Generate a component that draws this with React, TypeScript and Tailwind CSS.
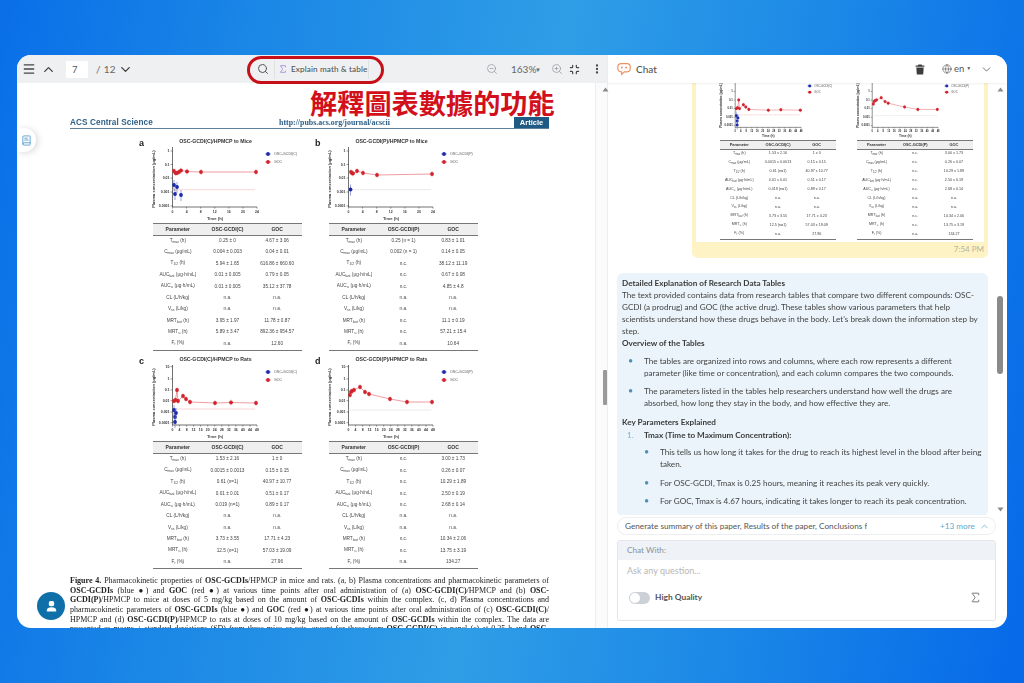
import React from "react";
import { Menu, ChevronUp, ChevronDown, Search, Sigma, ZoomOut, ZoomIn, Minimize, EllipsisVertical, Globe, BookText } from "lucide-react";

type Pt = [number, number];
type Row = [string, string, string, string];
type PanelData = {
  label: string;
  title: string;
  legend: string;
  col: string;
  ticks: Pt[];
  xLabels: string[];
  red: Pt[];
  blue: Pt[];
  dotted: string;
  dottedY: number;
  rows: Row[];
};

const mkRows = (v: [string, string][]): Row[] => {
  const names: [string, string, string][] = [
    ["T", "max", " (h)"],
    ["C", "max", " (μg/mL)"],
    ["T", "1/2", " (h)"],
    ["AUC", "last", " (μg·h/mL)"],
    ["AUC", "∞", " (μg·h/mL)"],
    ["CL", "", " (L/h/kg)"],
    ["V", "ss", " (L/kg)"],
    ["MRT", "last", " (h)"],
    ["MRT", "∞", " (h)"],
    ["F", "r", " (%)"],
  ];
  return names.map((n, i) => [n[0] + "|" + n[1] + "|" + n[2], v[i][0], v[i][1], ""] as Row);
};

const ticks5: Pt[] = [[6, 1], [19.5, 0.1], [33, 0.01], [47, 0.001], [61, 0.0001]];
const ticks6: Pt[] = [[3.7, 10], [16, 1], [27, 0.1], [37.7, 0.01], [49, 0.001], [59.7, 0.0001]];
const x24 = ["0", "4", "8", "12", "16", "20", "24"];
const x48 = ["0", "4", "8", "12", "16", "20", "24", "28", "32", "36", "40", "44", "48"];

const panels: PanelData[] = [
  {
    label: "a", title: "OSC-GCDI(C)/HPMCP to Mice", legend: "OSC-GCDI(C)", col: "OSC-GCDI(C)",
    ticks: ticks5, xLabels: x24, dotted: "#f1a3a8", dottedY: 44.7,
    red: [[21, 26], [22.5, 28], [24, 28], [26, 27], [28, 25.5], [34, 26.5], [48, 27], [103, 27]],
    blue: [[21, 40], [22, 49], [24, 42], [28, 50]],
    rows: mkRows([["0.25 ± 0", "4.67 ± 3.06"], ["0.004 ± 0.003", "0.04 ± 0.01"], ["5.94 ± 1.65", "616.86 ± 660.60"], ["0.01 ± 0.005", "0.79 ± 0.05"], ["0.01 ± 0.005", "35.12 ± 37.78"], ["n.a.", "n.a."], ["n.a.", "n.a."], ["3.95 ± 1.97", "11.78 ± 0.87"], ["5.89 ± 3.47", "892.36 ± 954.57"], ["n.a.", "12.60"]]),
  },
  {
    label: "b", title: "OSC-GCDI(P)/HPMCP to Mice", legend: "OSC-GCDI(P)", col: "OSC-GCDI(P)",
    ticks: ticks5, xLabels: x24, dotted: "#cfcfcf", dottedY: 44.7,
    red: [[22, 27], [23, 28], [24, 28.5], [28, 26], [34, 28], [48, 30], [103, 29]],
    blue: [[21.5, 44.5]],
    rows: mkRows([["0.25 (n = 1)", "0.83 ± 1.01"], ["0.002 (n = 1)", "0.14 ± 0.05"], ["n.c.", "38.12 ± 11.19"], ["n.c.", "0.67 ± 0.08"], ["n.c.", "4.85 ± 4.8"], ["n.a.", "n.a."], ["n.a.", "n.a."], ["n.c.", "11.1 ± 0.19"], ["n.c.", "57.21 ± 15.4"], ["n.a.", "10.64"]]),
  },
  {
    label: "c", title: "OSC-GCDI(C)/HPMCP to Rats", legend: "OSC-GCDI(C)", col: "OSC-GCDI(C)",
    ticks: ticks6, xLabels: x48, dotted: "#f1a3a8", dottedY: 46,
    red: [[21, 38], [22.5, 37], [24, 27], [25, 38], [30, 33], [33, 36], [37, 39], [62, 40], [78, 39.5], [103, 40]],
    blue: [[21, 47], [22, 54], [23, 50], [22, 59]],
    rows: mkRows([["1.53 ± 2.16", "1 ± 0"], ["0.0015 ± 0.0013", "0.15 ± 0.15"], ["0.61 (n=1)", "40.97 ± 10.77"], ["0.01 ± 0.01", "0.51 ± 0.17"], ["0.019 (n=1)", "0.89 ± 0.17"], ["n.a.", "n.a."], ["n.a.", "n.a."], ["3.73 ± 3.55", "17.71 ± 4.23"], ["12.5 (n=1)", "57.03 ± 19.09"], ["n.a.", "27.96"]]),
  },
  {
    label: "d", title: "OSC-GCDI(P)/HPMCP to Rats", legend: "OSC-GCDI(P)", col: "OSC-GCDI(P)",
    ticks: ticks6, xLabels: x48, dotted: "#cfcfcf", dottedY: 47,
    red: [[21, 32], [22, 29], [23, 28], [25, 27], [31, 24], [36, 29], [40, 31], [61, 36], [78, 39], [103, 39]],
    blue: [],
    rows: mkRows([["n.c.", "3.00 ± 1.73"], ["n.c.", "0.26 ± 0.07"], ["n.c.", "10.29 ± 1.89"], ["n.c.", "2.50 ± 0.19"], ["n.c.", "2.68 ± 0.14"], ["n.a.", "n.a."], ["n.a.", "n.a."], ["n.c.", "10.34 ± 2.06"], ["n.c.", "13.75 ± 3.19"], ["n.a.", "134.27"]]),
  },
];

function Chart({ p }: { p: PanelData }) {
  const line = (pts: Pt[]) => pts.map((q) => q.join(",")).join(" ");
  const xStep = 84.5 / (p.xLabels.length - 1);
  return (
    <svg width="152" height="78" viewBox="0 0 152 78" className="block overflow-visible">
      <text x="2" y="34" transform="rotate(-90 2 34)" textAnchor="middle" fontSize="4" fontWeight="700" fill="#333" fontFamily="Liberation Sans">Plasma concentration (μg/mL)</text>
      <line x1="19.5" y1="2" x2="19.5" y2="62" stroke="#333" strokeWidth="0.7" />
      <line x1="19.5" y1="62" x2="104" y2="62" stroke="#333" strokeWidth="0.7" />
      {p.ticks.map(([y, v]) => (
        <g key={v}>
          <line x1="17.5" y1={y} x2="19.5" y2={y} stroke="#333" strokeWidth="0.5" />
          <text x="16.5" y={y + 1.2} textAnchor="end" fontSize="3.5" fontWeight="700" fill="#333" fontFamily="Liberation Sans">{v}</text>
        </g>
      ))}
      {p.xLabels.map((l, i) => (
        <g key={l}>
          <line x1={19.5 + i * xStep} y1="62" x2={19.5 + i * xStep} y2="63.6" stroke="#333" strokeWidth="0.5" />
          <text x={19.5 + i * xStep} y="68" textAnchor="middle" fontSize="3.4" fontWeight="700" fill="#333" fontFamily="Liberation Sans">{l}</text>
        </g>
      ))}
      <text x="62" y="75" textAnchor="middle" fontSize="4.2" fontWeight="700" fill="#444" fontFamily="Liberation Sans">Time (h)</text>
      <line x1="19.5" y1={p.dottedY} x2="102" y2={p.dottedY} stroke={p.dotted} strokeWidth="0.7" strokeDasharray="1 0.6" />
      <polyline points={line(p.red)} fill="none" stroke="#e25b62" strokeWidth="0.6" />
      {p.red.map(([x, y], i) => (
        <g key={i}>
          <line x1={x} y1={y - 3} x2={x} y2={y + 3} stroke="#e98a8f" strokeWidth="0.5" />
          <circle cx={x} cy={y} r="1.9" fill="#d3222c" />
        </g>
      ))}
      {p.blue.map(([x, y], i) => (
        <g key={i}>
          <line x1={x} y1={y - 5} x2={x} y2={y + 6} stroke="#5a62c4" strokeWidth="0.6" />
          <circle cx={x} cy={y} r="1.9" fill="#1c2bab" />
        </g>
      ))}
      <circle cx="115" cy="9" r="1.9" fill="#1c2bab" />
      <line x1="112" y1="9" x2="118" y2="9" stroke="#1c2bab" strokeWidth="0.5" />
      <text x="121" y="10.2" fontSize="3.6" fill="#555" fontFamily="Liberation Sans">{p.legend}</text>
      <circle cx="115" cy="17" r="1.9" fill="#d3222c" />
      <line x1="112" y1="17" x2="118" y2="17" stroke="#d3222c" strokeWidth="0.5" />
      <text x="121" y="18.2" fontSize="3.6" fill="#555" fontFamily="Liberation Sans">GOC</text>
    </svg>
  );
}

function ParamName({ raw }: { raw: string }) {
  const [a, b, c] = raw.split("|");
  return (
    <>
      {a}
      {b ? <span className="text-[3.4px] align-[-1px]">{b}</span> : null}
      {c}
    </>
  );
}

function Panel({ p }: { p: PanelData }) {
  return (
    <div className="flex w-[176px] font-['Liberation_Sans',sans-serif] text-[#333]">
      <div className="w-[14px] shrink-0 text-[9px] font-bold leading-[8px] pt-[2px] text-[#222]">{p.label}</div>
      <div className="w-[149px]">
        <div className="h-[8px] pr-[24px] text-center text-[5.2px] leading-[8px] font-bold text-[#333] whitespace-nowrap">{p.title}</div>
        <div className="h-[78px]">
          <Chart p={p} />
        </div>
        <div className="border-t border-b border-[#777] bg-[#efefef] h-[12.5px] grid grid-cols-3 items-center text-center text-[5px] font-bold leading-none">
          <div>Parameter</div>
          <div>{p.col}</div>
          <div>GOC</div>
        </div>
        <div className="border-b border-[#777]">
          {p.rows.map((r) => (
            <div key={r[0]} className="h-[11.45px] grid grid-cols-3 items-center text-center text-[4.7px] leading-none text-[#444] whitespace-nowrap">
              <div><ParamName raw={r[0]} /></div>
              <div>{r[1]}</div>
              <div>{r[2]}</div>
            </div>
          ))}
        </div>
      </div>
    </div>
  );
}

function ScrollArrow({ down }: { down?: boolean }) {
  return (
    <svg width="7" height="5" viewBox="0 0 7 5" className="block">
      <polygon points={down ? "0.5,0.5 6.5,0.5 3.5,4.5" : "0.5,4.5 6.5,4.5 3.5,0.5"} fill="#8a8a8a" />
    </svg>
  );
}

function ChatLogo() {
  return (
    <svg width="14" height="14" viewBox="0 0 14 14" fill="none">
      <path d="M4 1.6h6a3.2 3.2 0 0 1 3.2 3.2v1.8A3.2 3.2 0 0 1 10 9.8H7.4L4.6 12.4V9.8H4A3.2 3.2 0 0 1 .8 6.6V4.8A3.2 3.2 0 0 1 4 1.6Z" stroke="#ee9163" strokeWidth="1.2" />
      <circle cx="4.9" cy="5.6" r="1" fill="#ee9163" />
      <circle cx="9.1" cy="5.6" r="1" fill="#ee9163" />
    </svg>
  );
}

function Trash() {
  return (
    <svg width="10" height="11" viewBox="0 0 10 11">
      <path d="M3.4 0.6h3.2l.5.9H9.4v1.2H.6V1.5h2.3ZM1.3 3.4h7.4l-.5 7H1.8Z" fill="#3c3c3c" />
    </svg>
  );
}

function Person() {
  return (
    <svg width="11" height="13" viewBox="0 0 14 16">
      <rect x="3.6" y="1" width="6.8" height="6.8" rx="2.2" fill="#fff" />
      <path d="M1 13c0-2.8 2.4-4.2 6-4.2s6 1.4 6 4.2v1.4H1Z" fill="#fff" />
    </svg>
  );
}

const Li = ({ children, nested }: { children: React.ReactNode; nested?: boolean }) => (
  <li className={`flex ${nested ? "pl-[22px]" : "pl-[6px]"}`}>
    <span className="w-[16px] shrink-0 text-[#4a90b8] text-[9px] leading-[12px]">•</span>
    <span>{children}</span>
  </li>
);

const Cap = ({ children }: { children: React.ReactNode }) => (
  <span className="block whitespace-nowrap text-justify [text-align-last:justify]">{children}</span>
);

export default function App() {
  return (
    <div className="w-[1024px] h-[683px] overflow-hidden pt-[55px] pl-[17px] bg-[linear-gradient(100deg,#0a6fe8_0%,#1a86e6_22%,#2f9ee6_50%,#1a86e7_75%,#0669e9_100%)]">
      <div className="w-[990px] h-[573px] rounded-[14px] bg-white overflow-hidden flex font-['Lato',sans-serif]">
        {/* PDF viewer */}
        <div className="relative w-[591px] shrink-0 flex flex-col">
          <div className="h-[28px] shrink-0 bg-[#eff0f1] flex items-center text-[#555] text-[10px] [&>*]:shrink-0">
            <Menu size={14} strokeWidth={2.4} className="ml-[5px] text-[#444]" />
            <ChevronUp size={15} strokeWidth={2.2} className="ml-[5px] text-[#444]" />
            <div className="ml-[10px] w-[22px] h-[17px] bg-white text-[9.5px] leading-[17px] pl-[6px] text-[#555]">7</div>
            <span className="ml-[8px] w-[18px] text-[10px] tracking-[0.3px] text-[#666] whitespace-nowrap">/ 12</span>
            <ChevronDown size={15} strokeWidth={2.2} className="ml-[4px] text-[#444]" />
            <Search size={12} strokeWidth={2} className="ml-[124px] text-[#555]" />
            <div className="ml-[5px] h-[19px] border-l border-r border-[#dfe1e3] w-[95px] flex items-center">
              <Sigma size={10} strokeWidth={1.8} className="ml-[3px] shrink-0 text-[#9a77e0]" />
              <span className="ml-[3px] text-[8.2px] font-medium tracking-[0.1px] text-[#555] whitespace-nowrap">Explain math &amp; table</span>
            </div>
            <ZoomOut size={12} strokeWidth={1.3} className="ml-[117px] text-[#8b9098]" />
            <span className="ml-[13px] w-[23px] text-[10px] text-[#666]">163%</span>
            <span className="ml-[1px] w-[6px] text-[6px] text-[#666]">▼</span>
            <ZoomIn size={12} strokeWidth={1.3} className="ml-[10px] text-[#8b9098]" />
            <Minimize size={11} strokeWidth={2.6} className="ml-[6px] text-[#444]" />
            <EllipsisVertical size={12} strokeWidth={2.6} className="ml-[11px] text-[#444]" />
          </div>

          <div className="flex-1 flex min-h-0">
            <div className="w-[578px] overflow-hidden pt-[34px] pl-[53px] blur-[0.4px]">
              <div className="w-[479px] h-[12px] flex items-end border-b border-[#5d7f9b] relative">
                <span className="w-[209px] font-['Liberation_Sans',sans-serif] font-bold text-[8.2px] leading-[11px] text-[#2e5f86] tracking-[0.1px]">ACS Central Science</span>
                <span className="w-[235px] font-['Liberation_Serif',serif] font-bold text-[7.9px] leading-[11px] text-[#2e5f86]">http://pubs.acs.org/journal/acscii</span>
                <span className="w-[35px] h-[11px] bg-[#1f5a85] text-white text-center font-['Liberation_Sans',sans-serif] font-bold text-[7.5px] leading-[11px]">Article</span>
              </div>
              <div className="ml-[69px] mt-[8px] grid grid-cols-[176px_176px] gap-y-[4.5px]">
                {panels.map((p) => (
                  <Panel key={p.label} p={p} />
                ))}
              </div>
              <p className="w-[479px] mt-[7px] font-['Liberation_Serif',serif] text-[8px] leading-[9.6px] text-[#222]">
                <Cap><b>Figure 4.</b> Pharmacokinetic properties of <b>OSC-GCDIs</b>/HPMCP in mice and rats. (a, b) Plasma concentrations and pharmacokinetic parameters of</Cap>
                <Cap><b>OSC-GCDIs</b> (blue ●) and <b>GOC</b> (red ●) at various time points after oral administration of (a) <b>OSC-GCDI(C)</b>/HPMCP and (b) <b>OSC-</b></Cap>
                <Cap><b>GCDI(P)</b>/HPMCP to mice at doses of 5 mg/kg based on the amount of <b>OSC-GCDIs</b> within the complex. (c, d) Plasma concentrations and</Cap>
                <Cap>pharmacokinetic parameters of <b>OSC-GCDIs</b> (blue ●) and <b>GOC</b> (red ●) at various time points after oral administration of (c) <b>OSC-GCDI(C)</b>/</Cap>
                <Cap>HPMCP and (d) <b>OSC-GCDI(P)</b>/HPMCP to rats at doses of 10 mg/kg based on the amount of <b>OSC-GCDIs</b> within the complex. The data are</Cap>
                <Cap>presented as means ± standard deviations (SD) from three mice or rats, except for those from <b>OSC-GCDI(C)</b> in panel (c) at 0.25 h and <b>OSC-</b></Cap>
              </p>
            </div>
            <div className="w-[13px] shrink-0 bg-[#fbfbfb] border-x border-[#eeeeee] flex flex-col items-center pt-[4px] pl-[7px]">
              <ScrollArrow />
              <div className="mt-[278px] w-[4px] h-[35px] bg-[#9a9a9a] rounded-[1px]" />
            </div>
          </div>

          {/* overlays */}
          <div className="absolute left-[230px] top-[1px] w-[137px] h-[28px] rounded-[14px] border-[3px] border-[#c70f1a]" />
          <div className="absolute left-[293px] top-[31px] font-['Noto_Sans_CJK_TC',sans-serif] font-bold text-[27.2px] leading-[32px] text-[#d2101c] whitespace-nowrap">解釋圖表數據的功能</div>
          <div className="absolute left-0 top-[73px] w-[19px] h-[24px] bg-white rounded-r-full shadow-[2px_1px_6px_rgba(0,0,0,0.15)] flex items-center justify-center">
            <BookText size={11} strokeWidth={1.8} className="text-[#4a97c8]" />
          </div>
          <div className="absolute left-[20px] top-[537px] w-[28px] h-[28px] rounded-full bg-[#0f6fa8] flex items-center justify-center">
            <Person />
          </div>
        </div>

        {/* Chat */}
        <div className="w-[399px] shrink-0 flex flex-col text-[#444]">
          <div className="h-[28px] shrink-0 flex items-center bg-white shadow-[0_1px_2px_rgba(0,0,0,0.06)] relative z-10 [&>*]:shrink-0">
            <div className="ml-[9px]"><ChatLogo /></div>
            <span className="ml-[5px] w-[21px] text-[10px] font-medium text-[#555]">Chat</span>
            <div className="ml-[258px]"><Trash /></div>
            <Globe size={10} strokeWidth={1.3} className="ml-[17px] text-[#444]" />
            <span className="ml-[2px] text-[9.5px] text-[#555]">en</span>
            <span className="ml-[2px] text-[5px] text-[#555]">▼</span>
            <ChevronDown size={13} strokeWidth={1.5} className="ml-[9px] text-[#555]" />
          </div>

          <div className="flex-1 min-h-0 flex">
            <div className="w-[388px] pl-[9px] overflow-hidden">
              <div className="ml-[75px] w-[296px] bg-[#fdf3c5] rounded-b-[6px] px-[4px]">
                <div className="h-[159px] bg-white overflow-hidden pl-[13px] blur-[0.4px]">
                  <div className="-mt-[13px] flex [zoom:0.78]">
                    {panels.slice(2).map((p) => (
                      <Panel key={p.label} p={p} />
                    ))}
                  </div>
                </div>
                <div className="h-[16px] text-right text-[8px] leading-[14px] text-[#b9b49a]">7:54 PM</div>
              </div>
              <div className="mt-[15px] w-[371px] h-[243px] overflow-hidden bg-[#eaf4fa] rounded-[6px] pt-[4px] px-[5px] text-[8.15px] leading-[12px] text-[#444] blur-[0.25px]">
                <p className="font-bold text-[#3a3a3a]">Detailed Explanation of Research Data Tables</p>
                <p>The text provided contains data from research tables that compare two different compounds: OSC-GCDI (a prodrug) and GOC (the active drug). These tables show various parameters that help scientists understand how these drugs behave in the body. Let's break down the information step by step.</p>
                <p className="font-bold text-[#3a3a3a]">Overview of the Tables</p>
                <ul className="mt-[6px] flex flex-col gap-[6px]">
                  <Li>The tables are organized into rows and columns, where each row represents a different parameter (like time or concentration), and each column compares the two compounds.</Li>
                  <Li>The parameters listed in the tables help researchers understand how well the drugs are absorbed, how long they stay in the body, and how effective they are.</Li>
                </ul>
                <p className="mt-[7px] font-bold text-[#3a3a3a]">Key Parameters Explained</p>
                <div className="flex pl-[5px] mt-[1px]">
                  <span className="w-[17px] text-[#7ab3cf]">1.</span>
                  <span className="font-bold text-[#3a3a3a]">Tmax (Time to Maximum Concentration):</span>
                </div>
                <ul className="mt-[5px] flex flex-col gap-[6.5px]">
                  <Li nested>This tells us how long it takes for the drug to reach its highest level in the blood after being taken.</Li>
                  <Li nested>For OSC-GCDI, Tmax is 0.25 hours, meaning it reaches its peak very quickly.</Li>
                  <Li nested>For GOC, Tmax is 4.67 hours, indicating it takes longer to reach its peak concentration.</Li>
                </ul>
              </div>
            </div>
            <div className="w-[11px] shrink-0 flex flex-col items-center pt-[4px] pb-[3px] pr-[3px]">
              <ScrollArrow />
              <div className="mt-[204px] w-[6px] h-[78px] rounded-[3px] bg-[#8a8a8a]" />
              <div className="mt-auto"><ScrollArrow down /></div>
            </div>
          </div>

          <div className="shrink-0 ml-[9px] w-[379px] h-[18px] mt-[2px] rounded-full border border-[#eceef0] flex items-center text-[8.2px] text-[#555]">
            <span className="ml-[7px] w-[242px] shrink-0 overflow-hidden whitespace-nowrap">Generate summary of this paper, Results of the paper, Conclusions from the paper</span>
            <span className="ml-[73px] shrink-0 text-[#62a9c9] whitespace-nowrap">+13 more</span>
            <ChevronUp size={11} strokeWidth={1.6} className="ml-[4px] shrink-0 text-[#62a9c9]" />
          </div>

          <div className="shrink-0 ml-[9px] w-[379px] h-[81px] mt-[5px] mb-[7px] rounded-[3px] border border-[#e3e5e8] flex flex-col">
            <div className="h-[19px] shrink-0 bg-[#eff3f7] pl-[9px] text-[8.2px] leading-[19px] text-[#8a9097]">Chat With:</div>
            <div className="pl-[9px] pt-[5px] text-[9px] leading-[12px] text-[#b7b7b7]">Ask any question...</div>
            <div className="mt-[14px] flex items-center pl-[11px]">
              <div className="w-[21px] h-[12px] rounded-full bg-[#ccd1d8] p-[1px]">
                <div className="w-[10px] h-[10px] rounded-full bg-white" />
              </div>
              <span className="ml-[5px] text-[8.4px] font-bold text-[#555]">High Quality</span>
              <Sigma size={13} strokeWidth={1.3} className="ml-auto mr-[13px] text-[#444]" />
            </div>
          </div>
        </div>
      </div>
    </div>
  );
}
